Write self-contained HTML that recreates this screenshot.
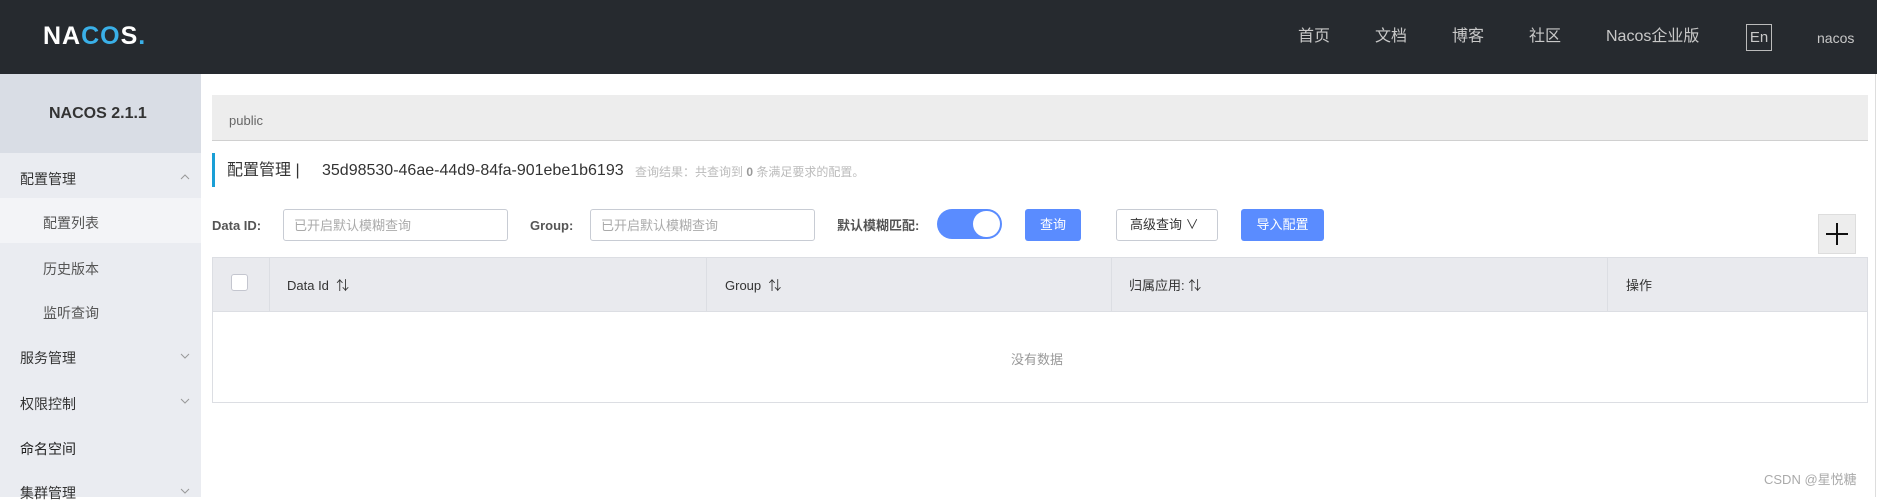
<!DOCTYPE html>
<html><head><meta charset="utf-8"><style>
*{margin:0;padding:0;box-sizing:border-box}
body{width:1877px;height:497px;overflow:hidden;background:#fff;font-family:"Liberation Sans","Noto Sans CJK SC",sans-serif;position:relative;color:#333}
.a{position:absolute;white-space:nowrap;line-height:1}
.hd{left:0;top:0;width:1877px;height:74px;background:#262a2f}
.nav{color:#c8c8c8;font-size:16px;top:29px}
.sb{left:0;top:74px;width:201px;height:423px;background:#eaecf1}
.mi{font-size:14px;color:#333;left:20px}
.si{font-size:14px;color:#555;left:43px}
.ar{left:180px}
.inp{height:32px;border:1px solid #c8ccd4;border-radius:3px;font-size:13px;color:#aaa;padding:9px 10px}
.lbl{font-size:13px;font-weight:bold;color:#555;top:219px}
.btn{background:#5a8cff;color:#fff;font-size:13px;border-radius:3px;text-align:center;line-height:32px;height:32px;top:209px}
.th{font-size:13px;color:#333;top:279px}
</style></head><body>
<div class="a hd"></div>
<div class="a" style="left:43px;top:24px;font-size:25px;font-weight:bold;color:#fff;letter-spacing:1px">NA<span style="color:#3ab0e8">CO</span>S<span style="color:#3ab0e8">.</span></div>
<div class="a nav" style="left:1298px">首页</div>
<div class="a nav" style="left:1375px">文档</div>
<div class="a nav" style="left:1452px">博客</div>
<div class="a nav" style="left:1529px">社区</div>
<div class="a nav" style="left:1606px">Nacos企业版</div>
<div class="a" style="left:1746px;top:24px;width:26px;height:27px;border:1px solid #bbb;color:#c8c8c8;font-size:15px;text-align:center;line-height:25px">En</div>
<div class="a" style="left:1817px;top:31px;color:#c8c8c8;font-size:14px">nacos</div>

<div class="a sb"></div>
<div class="a" style="left:0;top:74px;width:201px;height:79px;background:#d9dde5"></div>
<div class="a" style="left:49px;top:106px;font-size:16px;font-weight:bold;color:#333">NACOS 2.1.1</div>
<div class="a mi" style="top:172px">配置管理</div>
<svg class="a ar" style="top:174px" width="10" height="6"><path d="M1 5L5 1L9 5" fill="none" stroke="#999" stroke-width="1"/></svg>
<div class="a" style="left:0;top:198px;width:201px;height:45px;background:#f3f4f7"></div>
<div class="a si" style="top:216px">配置列表</div>
<div class="a si" style="top:262px">历史版本</div>
<div class="a si" style="top:306px">监听查询</div>
<div class="a mi" style="top:351px">服务管理</div>
<svg class="a ar" style="top:353px" width="10" height="6"><path d="M1 1L5 5L9 1" fill="none" stroke="#999" stroke-width="1"/></svg>
<div class="a mi" style="top:397px">权限控制</div>
<svg class="a ar" style="top:398px" width="10" height="6"><path d="M1 1L5 5L9 1" fill="none" stroke="#999" stroke-width="1"/></svg>
<div class="a mi" style="top:442px;color:#222">命名空间</div>
<div class="a mi" style="top:486px">集群管理</div>
<svg class="a ar" style="top:488px" width="10" height="6"><path d="M1 1L5 5L9 1" fill="none" stroke="#999" stroke-width="1"/></svg>

<div class="a" style="left:212px;top:95px;width:1656px;height:46px;background:#ededed;border-bottom:1px solid #d0d0d0"></div>
<div class="a" style="left:229px;top:114px;font-size:13px;color:#666">public</div>
<div class="a" style="left:212px;top:153px;width:3px;height:34px;background:#1a9fd6"></div>
<div class="a" style="left:227px;top:163px;font-size:16px;color:#333">配置管理 |</div>
<div class="a" style="left:322px;top:163px;font-size:16px;color:#333">35d98530-46ae-44d9-84fa-901ebe1b6193</div>
<div class="a" style="left:635px;top:166px;font-size:12px;color:#bbb">查询结果：共查询到 <b style="color:#999">0</b> 条满足要求的配置。</div>

<div class="a lbl" style="left:212px">Data ID:</div>
<div class="a inp" style="left:283px;top:209px;width:225px">已开启默认模糊查询</div>
<div class="a lbl" style="left:530px">Group:</div>
<div class="a inp" style="left:590px;top:209px;width:225px">已开启默认模糊查询</div>
<div class="a lbl" style="left:837px">默认模糊匹配:</div>
<div class="a" style="left:937px;top:209px;width:65px;height:30px;border-radius:15px;background:#5a8cff"></div>
<div class="a" style="left:973px;top:211px;width:27px;height:26px;border-radius:13px;background:#fff"></div>
<div class="a btn" style="left:1025px;width:56px">查询</div>
<div class="a" style="left:1116px;top:209px;width:102px;height:32px;border:1px solid #c8ccd4;border-radius:3px;font-size:13px;line-height:30px;padding-left:13px;color:#333">高级查询 ∨</div>
<div class="a btn" style="left:1241px;width:83px">导入配置</div>
<div class="a" style="left:1818px;top:214px;width:38px;height:40px;background:#ededed;border:1px solid #ddd"></div>
<div class="a" style="left:1826px;top:233px;width:22px;height:2px;background:#111"></div>
<div class="a" style="left:1836px;top:223px;width:2px;height:22px;background:#111"></div>

<div class="a" style="left:212px;top:257px;width:1656px;height:146px;border:1px solid #dcdee3"></div>
<div class="a" style="left:213px;top:258px;width:1654px;height:54px;background:#e9eaee;border-bottom:1px solid #dcdee3"></div>
<div class="a" style="left:269px;top:258px;width:1px;height:54px;background:#dcdee3"></div>
<div class="a" style="left:706px;top:258px;width:1px;height:54px;background:#dcdee3"></div>
<div class="a" style="left:1111px;top:258px;width:1px;height:54px;background:#dcdee3"></div>
<div class="a" style="left:1607px;top:258px;width:1px;height:54px;background:#dcdee3"></div>
<div class="a" style="left:231px;top:274px;width:17px;height:17px;border:1px solid #c4c6cf;border-radius:3px;background:#fff"></div>
<div class="a th" style="left:287px">Data Id &nbsp;⇅</div>
<div class="a th" style="left:725px">Group &nbsp;⇅</div>
<div class="a th" style="left:1129px">归属应用: ⇅</div>
<div class="a th" style="left:1626px">操作</div>
<div class="a" style="left:1011px;top:353px;font-size:13px;color:#999">没有数据</div>
<div class="a" style="left:1875px;top:74px;width:1px;height:423px;background:#ddd"></div>
<div class="a" style="left:1764px;top:473px;font-size:13px;color:#aaa">CSDN @星悦糖</div>
</body></html>
